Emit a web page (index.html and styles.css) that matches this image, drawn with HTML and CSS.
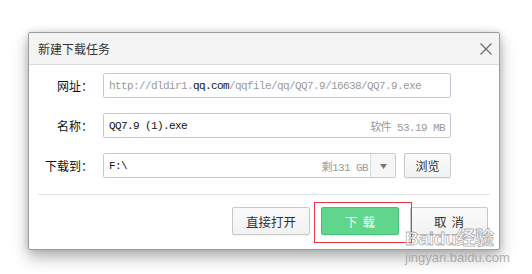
FILE: index.html
```html
<!DOCTYPE html>
<html lang="zh">
<head>
<meta charset="utf-8">
<title>新建下载任务</title>
<link rel="stylesheet" href="styles.css">
</head>
<body>
<div class="dialog">
  <div class="titlebar">
    <span class="title">新建下载任务</span>
    <svg class="close" width="12" height="12" viewBox="0 0 12 12"><path d="M0.5 0.5L11.5 11.5M11.5 0.5L0.5 11.5" stroke="#6b6b6b" stroke-width="1.2" fill="none"/></svg>
  </div>
  <div class="form">
    <label class="label">网址：</label>
    <div class="field"><span class="mono muted">http://dldir1.</span><span class="mono dark">qq.com</span><span class="mono muted">/qqfile/qq/QQ7.9/16638/QQ7.9.exe</span></div>

    <label class="label">名称：</label>
    <div class="field"><span class="mono dark">QQ7.9 (1).exe</span><span class="mono muted right">软件 53.19 MB</span></div>

    <label class="label">下载到：</label>
    <div class="pathrow">
      <div class="field pathfield">
        <span class="mono dark">F:\</span><span class="mono muted right">剩131 GB</span>
        <span class="drop"><svg width="7" height="5" viewBox="0 0 7 5"><path d="M0 0H7L3.5 5Z" fill="#777"/></svg></span>
      </div>
      <button class="btn browse">浏览</button>
    </div>
  </div>
  <div class="sep"></div>
  <div class="actions">
    <button class="btn action">直接打开</button>
    <button class="btn action primary spaced">下载</button>
    <button class="btn action spaced">取消</button>
  </div>
</div>
<div class="highlight"></div>
<div class="watermark">
  <div class="wm-logo">Bai<span class="paw">du</span>经验</div>
  <div class="wm-url">jingyan.baidu.com</div>
</div>
</body>
</html>
```
FILE: styles.css
```css
html, body {
  margin: 0;
  padding: 0;
  background: #fff;
  width: 532px;
  height: 274px;
  overflow: hidden;
  font-family: "Noto Sans CJK SC", "DejaVu Sans", sans-serif;
  position: relative;
}
.dialog {
  box-sizing: border-box;
  margin: 32px 0 0 28px;
  width: 472px;
  height: 218px;
  border: 1px solid #9c9c9c;
  border-radius: 2px;
  background: #fff;
  box-shadow: 0 7px 16px rgba(0,0,0,0.32), 0 0 6px rgba(0,0,0,0.12);
  display: flex;
  flex-direction: column;
}
.titlebar {
  height: 31px;
  border-bottom: 1px solid #dcdcdc;
  background: #f4f4f4;
  display: flex;
  align-items: center;
  padding: 0 7px 0 9px;
}
.title {
  font-size: 12px;
  color: #333;
  line-height: 16px;
}
.close {
  margin-left: auto;
  display: block;
}
.form {
  display: grid;
  grid-template-columns: 64px 1fr;
  column-gap: 10px;
  row-gap: 15px;
  padding: 8px 48px 0 0;
}
.label {
  font-size: 12px;
  color: #111;
  text-align: right;
  line-height: 25px;
  height: 25px;
}
.field {
  box-sizing: border-box;
  height: 25px;
  border: 1px solid #c5cad5;
  border-radius: 2px;
  background: #fff;
  display: flex;
  align-items: center;
  padding: 0 5px 0 5px;
  white-space: nowrap;
  overflow: hidden;
}
.mono {
  font-family: "Liberation Mono", "Noto Sans CJK SC", monospace;
  font-size: 11px;
  letter-spacing: -0.6px;
}
.muted { color: #9a9a9a; }
.dark { color: #111; }
.right { margin-left: auto; }
.pathrow {
  display: flex;
  gap: 8px;
}
.pathfield {
  flex: 1;
  padding-right: 0;
}
.drop {
  margin-left: 2px;
  width: 24px;
  height: 23px;
  border-left: 1px solid #d8dbe2;
  background: #f6f6f6;
  display: flex;
  align-items: center;
  justify-content: center;
}
.drop svg { display: block; margin-top: 1px; }
.btn {
  box-sizing: border-box;
  font-family: "Noto Sans CJK SC", "DejaVu Sans", sans-serif;
  font-size: 12px;
  color: #333;
  border: 1px solid #c8c8c8;
  border-radius: 2px;
  background: linear-gradient(#fafafa, #f2f2f2);
  padding: 0;
  margin: 0;
  box-shadow: 0 1px 1px rgba(0,0,0,0.06);
}
.browse {
  width: 47px;
  height: 25px;
}
.sep {
  height: 1px;
  background: #e3e3e3;
  margin: 16px 9px 0 9px;
}
.actions {
  display: flex;
  justify-content: flex-end;
  gap: 11px;
  padding: 12px 11px 0 0;
}
.action {
  width: 78px;
  height: 28px;
  font-size: 12.5px;
}
.spaced {
  letter-spacing: 5px;
  text-indent: 5px;
}
.primary {
  background: #5fd68c;
  border-color: #45c174;
  color: #fff;
}
.highlight {
  position: absolute;
  left: 314px;
  top: 202px;
  width: 96px;
  height: 39px;
  border: 1px solid #e8383d;
}
.watermark {
  position: absolute;
  left: 405px;
  top: 229px;
  width: 95px;
}
.wm-logo {
  font-family: "Liberation Sans", Arial, "Noto Sans CJK SC", sans-serif;
  font-weight: bold;
  font-size: 19px;
  line-height: 20px;
  color: rgba(255,255,255,0.75);
  -webkit-text-stroke: 0.8px rgba(140,140,140,0.7);
  letter-spacing: -0.3px;
  white-space: nowrap;
}
.wm-url {
  font-family: "Liberation Sans", Arial, sans-serif;
  font-size: 13px;
  line-height: 16px;
  color: rgba(160,160,160,0.85);
  margin-top: 1px;
}
```
